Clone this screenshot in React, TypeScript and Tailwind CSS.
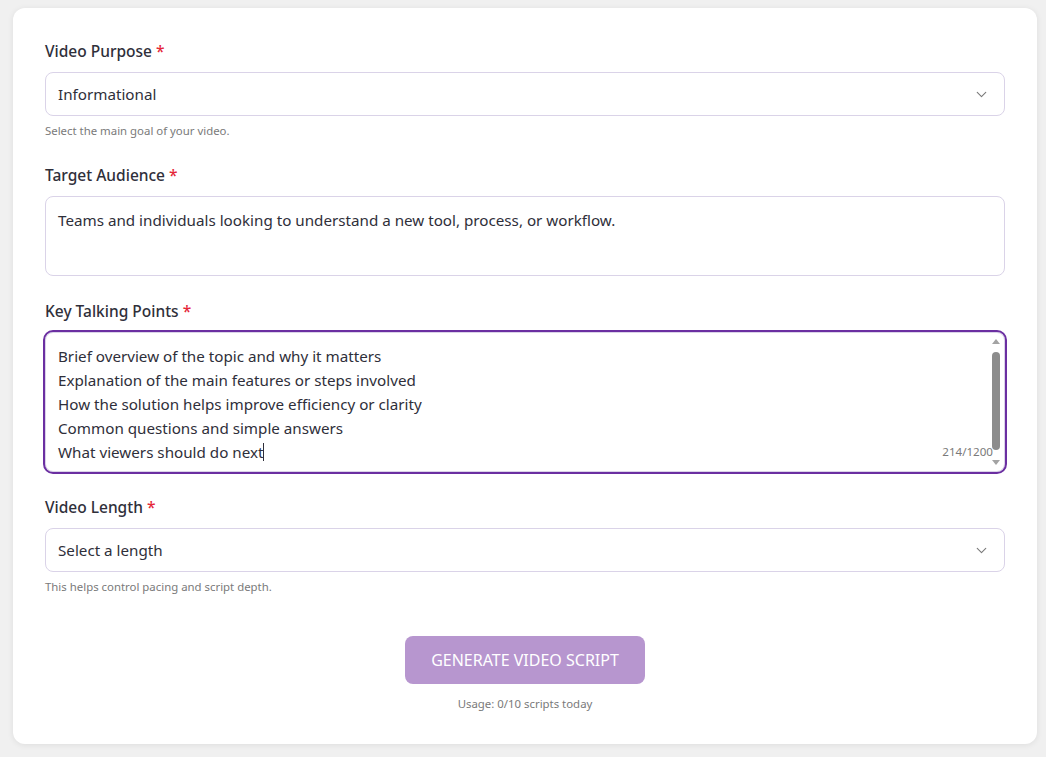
import React from "react";
import { ChevronDown } from "lucide-react";

function Label({ children }: { children: React.ReactNode }) {
  return (
    <div className="text-[15.5px] leading-[24px] font-medium text-[#2f2f3a]">
      {children} <span className="text-[#e5283a]">*</span>
    </div>
  );
}

function Select({ value }: { value: string }) {
  return (
    <div className="mt-[9px] h-[44px] rounded-lg border border-[#dad3e8] bg-white flex items-center justify-between pl-[12px] pr-[14px]">
      <span className="text-[15.2px] text-[#2f2f3a]">{value}</span>
      <ChevronDown size={17} strokeWidth={1.6} className="text-[#7a7a7a]" />
    </div>
  );
}

function Helper({ children }: { children: React.ReactNode }) {
  return <div className="mt-[7px] text-[11.4px] leading-[16px] text-[#7a7a7a]">{children}</div>;
}

export default function App() {
  const points = [
    "Brief overview of the topic and why it matters",
    "Explanation of the main features or steps involved",
    "How the solution helps improve efficiency or clarity",
    "Common questions and simple answers",
  ];
  return (
    <div
      className="min-h-[757px] bg-[#f0f0f0] pt-[8px] pl-[13px]"
      style={{ fontFamily: '"Noto Sans", sans-serif' }}
    >
      <div className="w-[1024px] rounded-xl bg-white shadow-[0_1px_6px_rgba(0,0,0,0.08)] px-8 pt-[31px] pb-[32px]">
        <Label>Video Purpose</Label>
        <Select value="Informational" />
        <Helper>Select the main goal of your video.</Helper>

        <div className="mt-[24px]">
          <Label>Target Audience</Label>
        </div>
        <div className="mt-[9px] h-[80px] rounded-lg border border-[#dad3e8] bg-white px-[12px] pt-[11px] text-[15.2px] leading-[24px] text-[#2f2f3a]">
          Teams and individuals looking to understand a new tool, process, or workflow.
        </div>

        <div className="mt-[23px]">
          <Label>Key Talking Points</Label>
        </div>
        <div className="relative mt-[9px] h-[140px] rounded-lg border border-[#dad3e8] outline-2 outline-[#6b2fa1] bg-white">
          <div className="h-full overflow-hidden pl-[12px] pt-[11px] text-[15.2px] leading-[24px] text-[#2f2f3a]">
            {points.map((p) => (
              <div key={p}>{p}</div>
            ))}
            <div>
              What viewers should do next
              <span className="inline-block w-px h-[18px] bg-[#2f2f3a] align-[-3px]" />
            </div>
          </div>
          <div className="absolute right-[2px] top-[6px] bottom-[6px] w-[12px] flex flex-col items-center">
            <svg width="8" height="5" viewBox="0 0 8 5" className="block">
              <path d="M0 5 L4 0 L8 5 Z" fill="#a3a3a3" />
            </svg>
            <div className="mt-[8px] w-[8px] flex-1 rounded-full bg-[#8c8c8c]" />
            <svg width="8" height="5" viewBox="0 0 8 5" className="mt-[10px] block">
              <path d="M0 0 L8 0 L4 5 Z" fill="#a3a3a3" />
            </svg>
          </div>
          <div className="absolute right-[11px] bottom-[11px] text-[11.6px] leading-[16px] text-[#7a7a7a]">
            214/1200
          </div>
        </div>

        <div className="mt-[23px]">
          <Label>Video Length</Label>
        </div>
        <Select value="Select a length" />
        <Helper>This helps control pacing and script depth.</Helper>

        <div className="mt-[41px] flex justify-center">
          <button className="w-[240px] h-[48px] rounded-lg bg-[#b796cf] text-white text-[16px] uppercase">
            Generate Video Script
          </button>
        </div>
        <div className="mt-[12px] text-center text-[11.4px] leading-[16px] text-[#7a7a7a]">
          Usage: 0/10 scripts today
        </div>
      </div>
    </div>
  );
}
